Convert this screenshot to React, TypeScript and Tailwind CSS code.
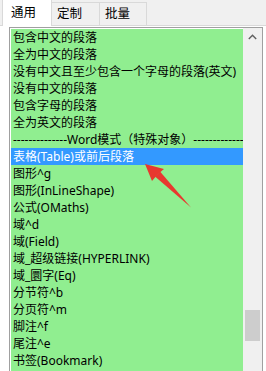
import React from "react";

const rows: string[] = [
  "包含中文的段落",
  "全为中文的段落",
  "没有中文且至少包含一个字母的段落(英文)",
  "没有中文的段落",
  "包含字母的段落",
  "全为英文的段落",
  "--------------Word模式（特殊对象）------------------",
  "表格(Table)或前后段落",
  "图形^g",
  "图形(InLineShape)",
  "公式(OMaths)",
  "域^d",
  "域(Field)",
  "域_超级链接(HYPERLINK)",
  "域_圜字(Eq)",
  "分节符^b",
  "分页符^m",
  "脚注^f",
  "尾注^e",
  "书签(Bookmark)",
];

export default function App() {
  return (
    <div
      className="relative w-[266px] h-[371px] overflow-hidden bg-white text-[12px] text-black"
      style={{ fontFamily: '"Noto Sans","Noto Sans CJK SC",sans-serif' }}
    >
      {/* tab strip */}
      <div className="flex items-end h-[26px] bg-[#f0f0f0] pl-[2px] border-b border-[#d9d9d9]">
        <div className="relative z-10 w-[50px] h-[27px] -mb-px bg-white border-t border-l border-r border-[#d9d9d9] flex items-center pl-[8px] leading-none text-[12.5px]">
          通用
        </div>
        <div className="w-[48px] h-[23px] bg-[#f0f0f0] border-t border-r border-[#d9d9d9] flex items-center pl-[5px] leading-none text-[12.5px]">
          定制
        </div>
        <div className="w-[47px] h-[23px] bg-[#f0f0f0] border-t border-r border-[#d9d9d9] flex items-center pl-[5px] leading-none text-[12.5px]">
          批量
        </div>
      </div>

      {/* list box */}
      <div className="ml-[9px] mt-[1px] w-[254px] h-[360px] border border-[#a0a0a0] flex overflow-hidden">
        <div className="w-[233px] pl-px pt-px h-full">
          <div className="h-full bg-[#90ee90] overflow-hidden">
            {rows.map((r, i) => (
              <div
                key={i}
                className={
                  "h-[17px] leading-[17px] pl-[2px] whitespace-nowrap overflow-hidden " +
                  (i === 7 ? "bg-[#3399ff] text-white" : "")
                }
              >
                {r}
              </div>
            ))}
          </div>
        </div>
        <div className="w-[19px] h-full bg-[#f0f0f0] flex flex-col items-center relative">
          <div className="h-[17px] w-full flex items-center justify-center">
            <svg width="9" height="6" viewBox="0 0 9 6">
              <path d="M0.8 5 L4.5 1.3 L8.2 5" fill="none" stroke="#606060" strokeWidth="1.4" />
            </svg>
          </div>
          <div className="absolute left-[2px] top-[282px] w-[15px] h-[31px] bg-[#cdcdcd]" />
        </div>
      </div>

      {/* red arrow */}
      <svg className="absolute left-0 top-0" width="266" height="371" viewBox="0 0 266 371">
        <path d="M145 164 L164 169 L158 174 L152 181 Z" fill="#e8382f" />
        <path d="M191 207.5 L160 171.5 L155 176.5 Z" fill="#e8382f" />
      </svg>
    </div>
  );
}
